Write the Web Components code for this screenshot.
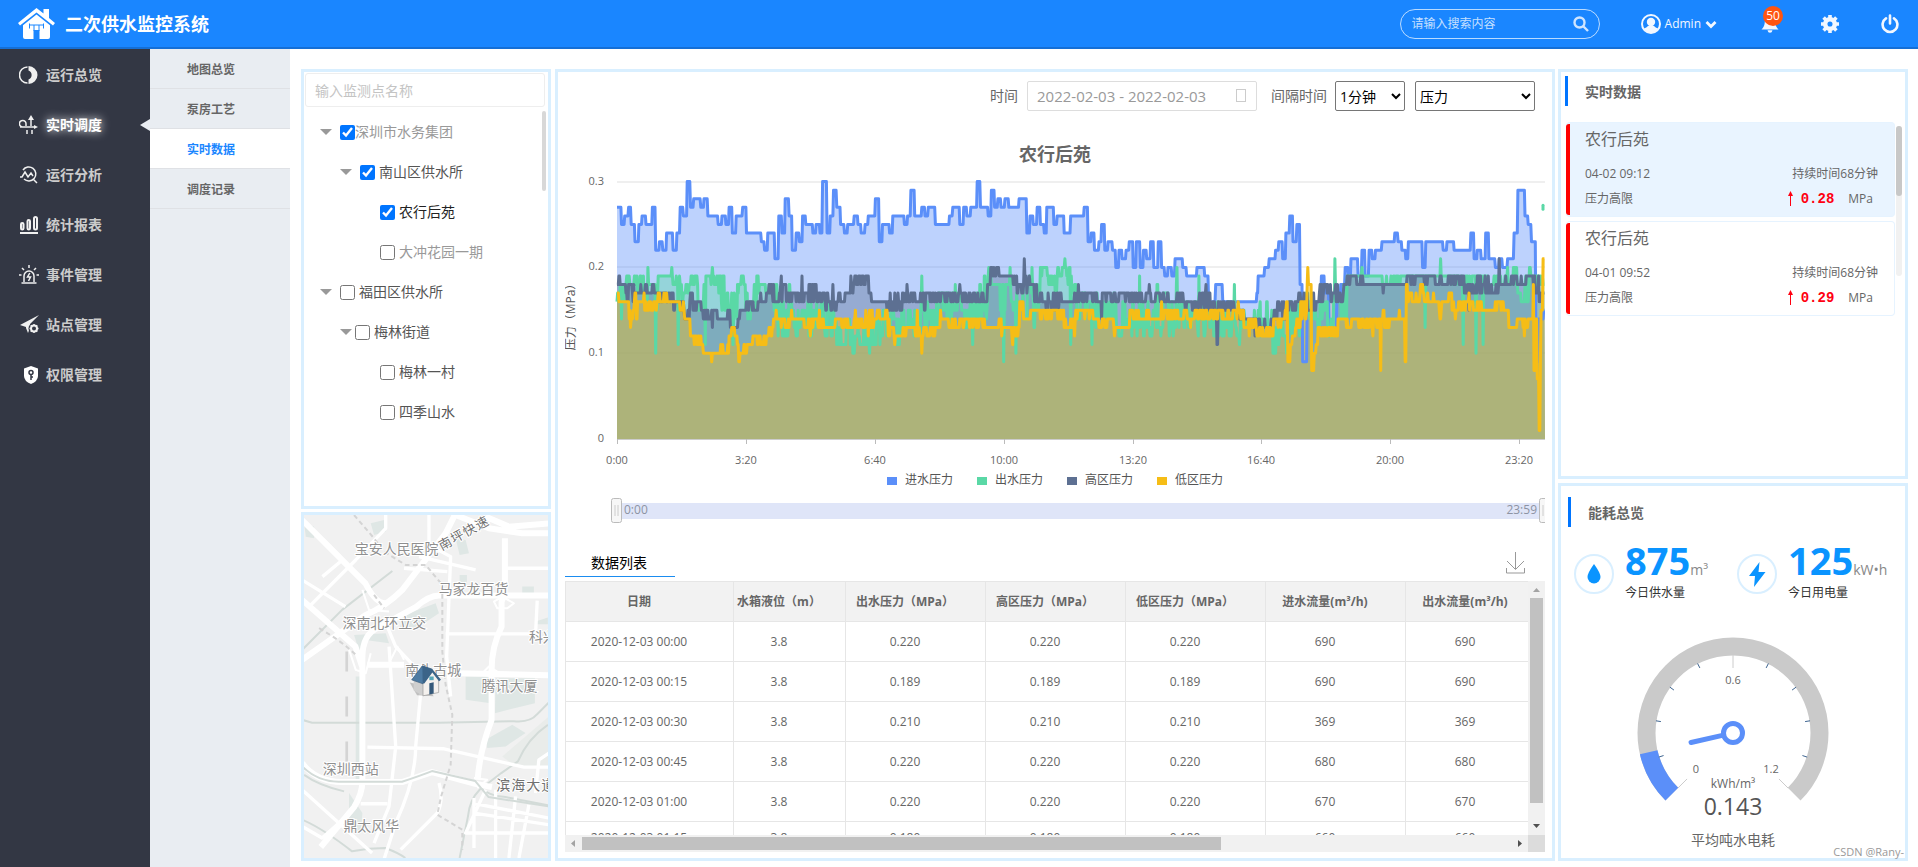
<!DOCTYPE html>
<html lang="zh-CN">
<head>
<meta charset="utf-8">
<title>二次供水监控系统</title>
<style>
  html, body { height: 100%; }
  body {
    margin: 0;
    font-family: "Open Sans", "Noto Sans CJK SC", sans-serif;
    font-size: 14px;
    line-height: 20px;
    color: #666;
    background: #fff;
    --blue: #1a86ff;
    --frame: #d9efff;
  }
</style>
</head>
<body>
<monitor-app></monitor-app>

<script>
const define = (name, html, setup) => {
  const template = document.createElement("template");
  template.innerHTML = html;
  customElements.define(name, class extends HTMLElement {
    constructor() {
      super();
      this.attachShadow({ mode: "open" });
      this.shadowRoot.appendChild(template.content.cloneNode(true));
    }

    connectedCallback() {
      if (setup) setup(this, this.shadowRoot);
    }
  });
};

/* ---------- header ---------- */

define("app-header", /* html */ `
  <style>
    :host {
      display: flex;
      align-items: center;
      box-sizing: border-box;
      height: 49px;
      flex: none;
      padding: 0 19px 0 18px;
      background: var(--blue);
      border-bottom: 2px solid #156fd6;
      color: #fff;
    }
    h1 { margin: 0 auto 0 10px; font-size: 18px; line-height: 24px; }
    svg { display: block; }
    .search {
      display: flex;
      align-items: center;
      box-sizing: border-box;
      width: 200px;
      height: 30px;
      padding: 0 10px 0 11px;
      border: 1px solid rgba(255, 255, 255, .7);
      border-radius: 15px;
    }
    input {
      flex: 1;
      min-width: 0;
      padding: 0;
      border: 0;
      outline: 0;
      background: none;
      color: #fff;
      font: 12px/20px "Open Sans", "Noto Sans CJK SC", sans-serif;
    }
    input::placeholder { color: #c6e0ff; opacity: 1; }
    button {
      display: flex;
      align-items: center;
      gap: 4px;
      padding: 0;
      border: 0;
      background: none;
      color: #f2f7ff;
      font: 12px/20px "Open Sans", sans-serif;
      cursor: pointer;
    }
    .user { margin-left: 41px; }
    .user svg:last-child { margin-top: 2px; }
    .bell { position: relative; margin-left: 44px; }
    .badge {
      position: absolute;
      left: 2px;
      top: -9px;
      width: 20px;
      border-radius: 10px;
      background: #ff5512;
      color: #fff;
      text-align: center;
    }
    .gear { margin-left: 42px; }
    .power { margin-left: 42px; }
  </style>
  <svg width="37" height="32" viewBox="0 0 37 32" fill="#fff">
    <path d="M18.500 0 0 15l2 2.400L18.500 4.400 35 17.400l2-2.400-6-4.900V1h-5.500v4.600z"/>
    <path d="M18.500 6.500 5 17.200V29q0 2 2 2h8.500v-9h6v9H30q2 0 2-2V17.200z"/>
    <path d="M11.500 15.500v5M11 17h14.500M25.500 15.500v5M16 17v6M21 17v6" fill="none" stroke="#1a86ff"/>
  </svg>
  <h1>二次供水监控系统</h1>
  <label class="search">
    <input type="text" placeholder="请输入搜索内容" aria-label="搜索">
    <svg width="16" height="16" viewBox="0 0 16 16" fill="none" stroke="#cfe5ff" stroke-width="2.400"><circle cx="6.500" cy="6.500" r="5"/><path d="m10 10 5 5"/></svg>
  </label>
  <button class="user">
    <svg width="20" height="20" viewBox="0 0 20 20"><circle cx="10" cy="10" r="9" fill="none" stroke="#f2f7ff" stroke-width="2"/><circle cx="10" cy="8" r="4.200" fill="#f2f7ff"/><path d="M3 14.500q2.500-1 4-2.500h6q1.500 1.500 4 2.500Q14 19 10 19t-7-4.500" fill="#f2f7ff"/></svg>
    Admin
    <svg width="12" height="8" viewBox="0 0 12 8" fill="none" stroke="#f2f7ff" stroke-width="2.800"><path d="m1.500 1 4.500 4.500L10.500 1"/></svg>
  </button>
  <button class="bell" aria-label="消息">
    <svg width="18" height="18" viewBox="0 0 18 18" fill="#f2f7ff"><path d="M9 0q1.200 0 1.200 1.300Q14 2.200 14.200 7q.2 5 3.300 7.500H.5Q3.600 12 3.800 7 4 2.200 7.800 1.300 7.800 0 9 0M6.500 15.300h5Q11 17.800 9 17.800t-2.500-2.500"/></svg>
    <span class="badge">50</span>
  </button>
  <button class="gear" aria-label="设置">
    <svg width="18" height="18" viewBox="0 0 18 18"><circle cx="9" cy="9" r="4.800" fill="none" stroke="#f2f7ff" stroke-width="4.500"/><path d="M9 0v4m0 10v4M0 9h4m10 0h4M2.600 2.600l2.900 2.900m7 7 2.900 2.900m0-12.800-2.900 2.900m-7 7-2.900 2.900" stroke="#f2f7ff" stroke-width="3.600"/></svg>
  </button>
  <button class="power" aria-label="退出">
    <svg width="18" height="20" viewBox="0 0 18 20" fill="none" stroke="#f2f7ff" stroke-width="2.600" stroke-linecap="round"><path d="M5 4.300a7.400 7.400 0 1 0 8 0M9 1.500v8"/></svg>
  </button>
`);

/* ---------- navigation ---------- */

define("nav-item", /* html */ `
  <style>
    :host { display: block; color: #ccc; font-weight: bold; }
    :host([active]) { color: #fff; text-shadow: 0 0 10px #fff; }
    a {
      position: relative;
      display: flex;
      align-items: center;
      gap: 7px;
      height: 50px;
      padding: 2px 0 0 19px;
      box-sizing: border-box;
      color: inherit;
      text-decoration: none;
    }
    :host([active]) a::after {
      content: "";
      position: absolute;
      right: 0;
      top: 20px;
      border: solid transparent;
      border-width: 6px 10px 6px 0;
      border-right-color: #e9edf2;
    }
  </style>
  <a href="#"><slot name="icon"></slot><slot></slot></a>
`);

define("side-nav", /* html */ `
  <style>
    :host { display: block; flex: none; width: 150px; background: #333744; }
    svg { display: block; flex: none; width: 20px; height: 20px; fill: none; stroke: #f0f0f0; stroke-width: 1.500; }
  </style>
  <nav>
    <nav-item><svg slot="icon" viewBox="0 0 20 20"><path d="M8.500 2a8 8 0 0 0 0 16"/><path d="M9.500 1a9 9 0 0 1 0 18v-4.500a4.800 4.800 0 0 0 0-9z" fill="#f0f0f0" stroke="none"/></svg>运行总览</nav-item>
    <nav-item active><svg slot="icon" viewBox="0 0 20 20"><path d="M1 12h15M4 12a3.300 3.300 0 1 1 3-3v2M12 11V4M8 15v4m5-4v4"/><path d="m12 0 3 5H9zm7 12-4-2v4z" fill="#f0f0f0" stroke="none"/></svg>实时调度</nav-item>
    <nav-item><svg slot="icon" viewBox="0 0 20 20"><path d="M4 5a7 7 0 1 1 1 9M1 12h2l3-5 3 5 3-4 2 3M14.500 14.500 18 18"/></svg>运行分析</nav-item>
    <nav-item><svg slot="icon" viewBox="0 0 20 20"><g stroke-width="2"><rect x="2" y="8" width="2.500" height="6.500" rx="1.200"/><rect x="8.500" y="5" width="2.500" height="9.500" rx="1.200"/><rect x="15" y="2" width="3" height="12.500" rx="1.500"/><path d="M1 18h18"/></g></svg>统计报表</nav-item>
    <nav-item><svg slot="icon" viewBox="0 0 20 20"><path d="M5 17v-6a5 5 0 0 1 10 0v6M2.500 18h15M0 10h2.500m15 0H20M10 0v3M3 3l2 2m12-2-2 2"/><path d="M10.800 8 8.500 12h3l-2 4"/></svg>事件管理</nav-item>
    <nav-item><svg slot="icon" viewBox="0 0 20 20"><path d="M20 0 1 10l6 2v1l2 5 2-5V9z" fill="#f0f0f0" stroke="none"/><circle cx="15" cy="13.500" r="5.500" fill="#333744" stroke="none"/><g stroke-width="2"><circle cx="15" cy="13.500" r="3"/><path d="M15 9v1.500m0 6V18m-4.500-4.500H12m6 0h1.500m-7.700-3.200 1.100 1.100m4.200 4.200 1.100 1.100m0-6.400-1.100 1.100m-4.200 4.200-1.100 1.100" stroke-width="1.500"/></g></svg>站点管理</nav-item>
    <nav-item><svg slot="icon" viewBox="0 0 20 20"><path d="m12 1 7 2.500V11q0 5-7 8-7-3-7-8V3.500z" fill="#fff" stroke="none"/><g stroke="#333744"><circle cx="12" cy="7.500" r="2"/><path d="M12 9v6m0-3h2"/></g></svg>权限管理</nav-item>
  </nav>
`);

define("sub-nav", /* html */ `
  <style>
    :host { display: block; flex: none; width: 140px; background: #e9edf2; }
    a {
      display: block;
      height: 39px;
      padding-left: 37px;
      border-bottom: 1px solid #dfe1e5;
      color: #666;
      font-size: 12px;
      font-weight: bold;
      line-height: 41px;
      text-decoration: none;
    }
    a.active { background: #fff; color: var(--blue); }
  </style>
  <nav>
    <a href="#">地图总览</a>
    <a href="#">泵房工艺</a>
    <a href="#" class="active">实时数据</a>
    <a href="#">调度记录</a>
  </nav>
`);

/* ---------- generic parts ---------- */

define("panel-box", /* html */ `
  <style>
    :host {
      display: flex;
      flex-direction: column;
      box-sizing: border-box;
      min-height: 0;
      min-width: 0;
      overflow: hidden;
      border: 3px solid var(--frame);
    }
  </style>
  <slot></slot>
`);

define("panel-title", /* html */ `
  <style>
    :host { display: block; flex: none; border-left: 3px solid #0075ff; padding-left: 17px; }
    h2 { margin: 0; font-size: 14px; line-height: 32px; height: 30px; }
  </style>
  <h2><slot></slot></h2>
`);

/* ---------- monitoring point tree ---------- */

define("tree-row", /* html */ `
  <style>
    :host { display: block; color: #555; }
    :host([muted]) { color: #999; }
    :host([current]) { color: #222; }
    div { display: flex; align-items: center; height: 40px; }
    i {
      flex: none;
      width: 0;
      margin-right: 8px;
      border: solid transparent;
      border-width: 6px 6px 0;
      border-top-color: #999;
    }
    :host([leaf]) i { visibility: hidden; }
    :host([near]) i { margin-right: 3px; }
    label { display: flex; align-items: center; gap: 4px; }
    :host([tight]) label { gap: 0; }
    input { width: 15px; height: 15px; margin: 0; accent-color: #0075ff; }
  </style>
  <div><i></i><label><input type="checkbox"><span><slot></slot></span></label></div>
`, (host, root) => {
  root.querySelector("div").style.paddingLeft = (Number(host.getAttribute("level")) * 20) + "px";
  root.querySelector("input").checked = host.hasAttribute("checked");
});

define("point-tree", /* html */ `
  <style>
    :host { display: flex; flex-direction: column; flex: 1; min-height: 0; }
    input {
      height: 34px;
      margin: 1px 3px 0 1px;
      padding: 0 9px;
      border: 1px solid #eee;
      border-radius: 3px;
      box-sizing: border-box;
      outline: 0;
      color: #666;
      font: 14px/20px "Open Sans", "Noto Sans CJK SC", sans-serif;
    }
    input::placeholder { color: #c4c4c4; opacity: 1; }
    .body { display: flex; flex: 1; min-height: 0; padding: 4px 2px 0 16px; }
    .rows { flex: 1; padding-top: 1px; overflow: hidden; }
    .thumb { width: 4px; height: 80px; border-radius: 2px; background: #d8d8d8; }
  </style>
  <input type="text" placeholder="输入监测点名称" aria-label="监测点名称">
  <div class="body">
    <div class="rows">
      <tree-row level="0" checked muted tight>深圳市水务集团</tree-row>
      <tree-row level="1" checked>南山区供水所</tree-row>
      <tree-row level="2" leaf checked current>农行后苑</tree-row>
      <tree-row level="2" leaf muted>大冲花园一期</tree-row>
      <tree-row level="0">福田区供水所</tree-row>
      <tree-row level="1" near>梅林街道</tree-row>
      <tree-row level="2" leaf>梅林一村</tree-row>
      <tree-row level="2" leaf>四季山水</tree-row>
    </div>
    <div class="thumb"></div>
  </div>
`);

/* ---------- map ---------- */

define("area-map", /* html */ `
  <style>
    :host { display: block; flex: 1; min-height: 0; background: #f1f1f1; }
    svg { display: block; width: 100%; height: 100%; }
    path { stroke-linejoin: round; }
    .w { stroke: #fff; fill: none; }
    .g { stroke: #d3dbd8; stroke-width: 6; fill: none; }
    .rail { stroke: #d4d4d4; stroke-width: 6; stroke-dasharray: 14 10; fill: none; }
    .lake { fill: #dfe7e5; }
    text { font-size: 42px; fill: #8f8f8f; stroke: #fff; stroke-width: 6; paint-order: stroke; }
    .road { fill: #707070; letter-spacing: 3px; }
    .slope { font-size: 39px; }
  </style>
  <svg viewBox="42 45 738 1030" preserveAspectRatio="xMidYMid slice">
    <path class="lake" d="M45 70l30 10v35l-25-5zM245 70l40-10 5 35-35 10zM500 115l30 5 10 40-28 5zM345 345l95-35 10 30-60 40-60 10zM195 405l95-5 10 30-60-8-30 30zM530 530h75v80l-75-10zM620 535h118v75l-120 30zM200 530h18v310h-18zM590 720l80-45 40 25-60 40-55 5zM180 880l40 60-5 60-35-10zM512 225h22v30h-22zM700 260h35v20h-35zM740 365l37-12v20h-37z"/>
    <path d="M640 770l140-120v150H680z" fill="#e9ecea"/>
    <path class="g" d="M39 450l120-120L310 213M39 660l30 9h380l225-5q50 5 70-20l35-35M777 675q-60 40-90 110l-50 35-65 50q-30 30-35 80l-25 125M45 825q40 30 120 50M39 960q60 25 150 95 50-10 100-10 40 15 60 30M570 860q30 30 80 32l130 25"/>
    <g class="w" stroke-width="18">
      <path d="M39 480 230 345q60-25 110-75L470 100l30-60M39 60l80 80 110 110q30 60 60 60M39 300l160 140 20 60"/>
      <path d="M780 287H450q-30 0-70 35l-110 60q-50 20-50 90v370q0 40-25 80l-100 120"/>
      <path d="M648 115v130q0 40-10 60v75q-30 60-30 130v150q-35 90-42 180M500 520l280 6M235 495h110M39 790q40 55 120 57h180q60-20 90-30l130 35 50 10"/>
      <path d="M500 45l100 40 100 15h80M590 50l70 30 120-10"/>
    </g>
    <g class="w" stroke-width="10">
      <path d="M295 380l25 60 75 80v60l-15 160q0 100-60 230l-45 140M300 440l20 300-20 180-45 110M420 45v90l65 35-12 300 12 120M345 205l130 10M655 205h125M470 402h270l5-100M235 742l230 5 240 55h75M39 240l130 80M60 320l140-140 90-95V45M100 230l60-50M39 870l210 190M39 980l60 35 90-80M390 170l170 40M445 940l-110 110M450 850q15 50-5 90M215 912h80M555 895v150M590 870l-60 130h250M620 870v205M680 890l-20 185M720 915l-30 160M555 940l225 35M550 910l230 45M740 880l10-100 30-20"/>
      <path d="M640 290l-25 15 10 20h30l20-15zM600 500l-20 20 25 10 20-15zM220 270l20 60 60 5M305 480l20-40 20 40M180 450l20 60 30 10 15-60M555 835l40 5-30 25" stroke-width="6"/>
    </g>
    <path class="g" d="M39 800q50 50 120 46h180q60-20 90-32l130 30 40 48 180 28"/>
    <path class="rail" d="M195 45l60 70 30 40 65 40h60l50 60v200l10 100 20 90-5 150-30 100-10 50 75 45v60"/>
    <path class="rail" d="M90 385q70 40 110 80M255 285l30 40" stroke-width="9"/>
    <path d="M173 455v335" fill="none" stroke="#d4d4d4" stroke-width="8" stroke-dasharray="60 75"/>
    <text x="197" y="163">宝安人民医院</text>
    <text x="449" y="283">马家龙百货</text>
    <text x="160" y="385">深南北环立交</text>
    <text x="349" y="526">南头古城</text>
    <text x="720" y="427">科兴</text>
    <text x="578" y="574">腾讯大厦</text>
    <text x="101" y="822">深圳西站</text>
    <text x="163" y="993">鼎太风华</text>
    <text class="road" x="622" y="872">滨海大道</text>
    <text class="road slope" transform="translate(458 152) rotate(-29)">南坪快速</text>
    <g>
      <path d="M362 548l22 38 50 3-20-30z" fill="#777" opacity=".4"/>
      <path d="M374 538l26-34 32 34v40l-30 10-28-16z" fill="#cfcfcf"/>
      <path d="M402 550l30-38 17 24v42l-47 10z" fill="#f4f1ee" stroke="#999" stroke-width="2"/>
      <path d="M368 540l32-42 30 10-28 44z" fill="#4d7ba3" stroke="#37597a" stroke-width="2"/>
      <path d="M400 498l30 10 26 32-6 4-20-26-24 33-5-2z" fill="#3b6488"/>
      <path d="M421 550l13-3v34l-13 3z" fill="#35597a"/>
      <path d="M421 530h13v11h-13z" fill="#56a6b8"/>
    </g>
  </svg>
`);

/* ---------- pressure chart ---------- */

// Times are in thirds of a pixel of the plot at its design width (2784 = 24h);
// pressures are in 0.01 MPa. "start:value" holds until the next entry and
// "start:low-high" jitters between the two.
const SPAN = 2784;
const MINUTES = 1440;

const SERIES = [
  {
    name: "进水压力",
    color: "#5b8ff9",
    steps: "0:27 12:25 22:26 33:27 42:25 53:23 64:25 75:26 86:25 106:27 116:22 127:23 137:22 148:24 168:22 179:24 188:27 198:26 209:30 219:27 229:28 250:27 261:28 272:26 303:25 315:26 325:25 336:27 346:24 357:26 377:27 388:24 432:23 441:22 452:24 473:21 484:26 494:24 504:28 515:26 525:22 536:24 546:23 556:26 566:25 587:24 597:25 608:24 616:30 629:24 639:26 649:29 659:27 670:25 681:24 691:25 711:26 722:25 732:24 744:25 754:26 775:28 785:23 796:25 816:24 827:26 861:25 871:26 881:29 892:26 913:27 923:26 933:27 954:25 996:26 1007:27 1028:25 1039:27 1049:26 1060:27 1080:30 1090:27 1113:26 1122:29 1132:27 1142:28 1152:27 1163:28 1175:27 1206:28 1228:24 1238:26 1248:25 1259:27 1269:25 1280:24 1289:27 1310:25 1320:26 1340:24 1360:26 1400:27 1412:23 1422:24 1432:22 1445:23 1453:25 1463:22 1473:23 1485:22 1495:20 1505:22 1515:21 1526:22 1537:23 1547:20 1557:23 1568:20 1578:22 1588:21 1600:23 1610:20 1623:23 1633:20 1643:19 1653:20 1664:19 1674:21 1696:20 1708:19 1739:20 1762:19 1773:16 1795:18 1817:16 1918:17 1922:19 1943:20 1955:21 1975:22 1985:23 1997:21 2006:24 2017:26 2028:23 2038:25 2049:18 2057:9 2070:15 2080:16 2112:19 2122:17 2135:13 2158:16 2170:18 2183:20 2193:19 2202:21 2222:19 2234:22 2244:19 2255:22 2265:21 2275:22 2293:23 2332:24 2343:23 2353:22 2365:21 2374:23 2415:20 2426:23 2478:22 2489:23 2510:22 2560:24 2570:21 2580:22 2591:21 2605:24 2615:21 2635:20 2645:21 2655:20 2670:21 2690:24 2702:29 2723:26 2733:25 2743:23 2756:9 2764:14 2779:15"
  },
  {
    name: "出水压力",
    color: "#5ad8a6",
    steps: "0:16-19 25:18-19 60:17-19 80:16-18 110:15-19 122:19 168:18-19 190:16-19 212:16-18 222:18-19 240:15-18 265:19 280:18-19 305:15-19 345:14-18 360:17-19 385:14-18 410:13-19 430:17-18 460:15-19 475:12-18 520:12-16 650:11-15 700:10-13 765:11-15 860:12-15 910:13-16 960:13-17 1060:14-19 1112:18-19 1130:13-18 1180:14-18 1220:13-19 1270:19-20 1290:18-19 1310:17-20 1380:14-18 1430:13-17 1500:12-16 1620:12-18 1680:13-16 1740:12-16 1830:12-16 1870:13-15 1920:12-16 1965:10-14 2015:12-16 2060:14-18 2100:12-16 2150:14-18 2190:19 2290:18-19 2350:19 2440:19 2500:18-19 2670:18-20 2700:16-19 2735:18-20 2750:18-19 2778:18",
    spikes: { 14: 14, 92: 20, 116: 10, 165: 20, 183: 11, 265: 11, 286: 20, 348: 11, 914: 19, 1015: 18, 1067: 11, 1115: 20, 1160: 9, 1180: 20, 1196: 10, 1246: 20, 1343: 21, 1362: 11, 1424: 11, 1567: 19, 1680: 20, 1745: 19, 1852: 18, 1867: 11, 2153: 21, 2154: 21, 2235: 20, 2425: 13, 2470: 21, 2538: 11, 2578: 10, 2598: 11 }
  },
  {
    name: "高区压力",
    color: "#5d7092",
    steps: "0:18-19 8:18 22:16-18 55:17 70:17-18 125:16-17 170:15-16 200:14-15 218:15-17 230:15-16 255:14-15 280:14-15 340:13 362:14-15 385:15-16 430:16-17 455:16-18 475:16-17 490:16-18 510:16-17 562:16-18 606:15-17 660:16-17 700:17-19 720:18-19 755:17 762:16 802:15-17 855:16-17 920:15-17 950:16-17 1110:17-18 1120:19-20 1150:19 1186:18-19 1200:17-18 1220:17-19 1250:16-18 1272:15-17 1330:16-17 1380:16-17 1630:16-17 1700:15-16 1730:15-17 1780:15-16 1858:14-15 1880:14 1915:13-14 1970:14-16 2005:15-16 2040:15-17 2100:16-18 2180:18 2190:18-19 2240:18 2288:17-18 2300:18 2355:18-19 2530:17-19 2560:17-18 2580:17-19 2615:17-18 2645:18 2665:18-19 2750:17-19 2765:16-18 2779:17",
    spikes: { 286: 13, 493: 19, 555: 19, 648: 18, 870: 18, 1028: 18, 1126: 20, 1222: 21, 1385: 18, 1454: 14, 1596: 18, 1767: 18, 1800: 11, 1801: 11, 1914: 12, 2555: 15, 2646: 21 }
  },
  {
    name: "低区压力",
    color: "#f6bd16",
    steps: "0:17 4:16 24:14-16 50:14-17 60:16 80:15-16 120:16-17 152:16 188:15-16 202:13-14 220:12 232:11-12 258:10 305:10-11 335:12 344:13 352:12 360:11 364:10 375:10-11 390:11-12 450:12-13 465:13-14 475:14 492:13-14 520:14 555:13-14 620:13 650:13-14 740:13-15 770:14-15 812:12-14 830:12 850:12-13 870:13 895:12-13 955:13 970:14 985:13-14 1012:13-14 1105:13 1140:13-14 1155:13 1185:12-13 1208:14-16 1240:15 1268:14-15 1340:13-14 1342:13-14 1365:14-15 1430:14 1440:13-14 1470:14 1490:13 1530:13-14 1538:14-15 1565:14 1580:14-15 1605:14 1620:14-15 1640:14-15 1710:14 1730:14-15 1880:13-14 1916:12-13 1970:13-14 1995:14-15 2008:16 2012:9 2020:11 2026:12 2034:13-14 2050:14-16 2070:18 2084:8 2090:10 2096:11 2103:12-13 2155:12 2162:14 2180:13-14 2208:14 2220:13-14 2290:14 2297:15 2302:13-14 2320:14 2364:9 2367:18 2372:16-17 2408:17-18 2422:16-17 2450:16 2466:14-15 2474:16 2495:17 2505:15-16 2540:15-16 2600:15 2628:15-16 2660:15 2675:13 2700:14 2712:13-14 2748:18 2751:8 2755:14 2760:7 2765:1 2769:10 2772:15 2778:21",
    spikes: { 40: 13, 82: 17, 285: 9, 366: 9, 367: 9, 477: 15, 523: 15, 580: 12, 608: 15, 715: 15, 754: 12, 834: 11, 900: 15, 915: 10, 971: 15, 1155: 12, 1187: 11, 1215: 16, 1226: 14, 1373: 12, 1395: 15, 1493: 12, 1633: 16, 1720: 13, 1863: 16, 1897: 12, 2073: 20, 2268: 12, 2291: 8, 2347: 15, 2414: 18, 2471: 14, 2515: 14, 2555: 17, 2722: 12 }
  }
];

function samples(series, seed) {
  const steps = series.steps.split(" ").map(s => {
    const [start, range] = s.split(":");
    const [low, high = low] = range.split("-");
    return { start: +start, low: +low, high: +high };
  });
  const random = () => {
    seed = (seed * 16807) % 2147483647;
    return seed / 2147483647;
  };
  const values = [];
  for (let i = 0; i < MINUTES; i++) {
    const at = i / MINUTES * SPAN;
    let step = steps[0];
    for (const s of steps) if (s.start <= at) step = s;
    const last = values[i - 1];
    const hold = last >= step.low && last <= step.high && random() < .4;
    values.push(hold ? last : step.low + Math.floor(random() * (step.high - step.low + 1)));
  }
  for (const at in series.spikes || {}) {
    values[Math.round(at / SPAN * MINUTES)] = series.spikes[at];
  }
  return values;
}

const TIMES = ["0:00", "3:20", "6:40", "10:00", "13:20", "16:40", "20:00", "23:20"];

define("pressure-chart", /* html */ `
  <style>
    :host { display: block; flex: none; height: 356px; }
    svg { display: block; width: 100%; height: 100%; }
    text { font-size: 12px; fill: #555; }
    .tick { font-size: 11px; fill: #666; }
    .zoom { fill: #8d93a3; }
    polyline { fill: none; stroke-width: 3; stroke-linejoin: round; }
  </style>
  <svg></svg>
`, (host, root) => {
  const data = SERIES.map((s, i) => samples(s, 97 + i * 1301));

  const draw = () => {
    const width = host.clientWidth;
    const left = 52;
    const bottom = 269;
    const plot = width - left;
    const x = minute => left + minute / MINUTES * plot;
    const y = value => bottom - value * 8.58;
    let out = "";

    [10, 20, 30].forEach(v => {
      out += `<path d="M${left} ${Math.round(y(v))}H${width}" stroke="#efefef" stroke-width="2"/>`;
    });
    const lines = data.map(values => values.map((v, i) => `${x(i).toFixed(1)},${y(v).toFixed(1)}`).join(" "));
    SERIES.forEach((s, i) => {
      out += `<polygon points="${left},${bottom} ${lines[i]} ${width},${bottom}" fill="${s.color}" fill-opacity=".4"/>`;
    });
    SERIES.forEach((s, i) => {
      out += `<polyline points="${lines[i]}" stroke="${s.color}"/>`;
    });
    out += `<path d="M${width - 2} ${y(27) - 2}v4" stroke="#5ad8a6" stroke-width="3" stroke-linecap="round"/>`;

    out += `<path d="M${left} ${bottom}.5H${width}" stroke="#ccc"/>`;
    [0, 10, 20, 30].forEach(v => {
      out += `<text class="tick" x="39" y="${Math.round(y(v)) + 3}" text-anchor="end">${v / 100}</text>`;
    });
    TIMES.forEach((t, i) => {
      const tx = Math.round(x(i * 200));
      out += `<path d="M${tx}.5 ${bottom}v5" stroke="#bbb"/><text class="tick" x="${tx}" y="294" text-anchor="middle">${t}</text>`;
    });
    out += `<text transform="translate(10 144) rotate(-90)" text-anchor="middle">压力（MPa）</text>`;

    SERIES.forEach((s, i) => {
      const lx = width / 2 - 168 + i * 90;
      out += `<rect x="${lx}" y="307" width="10" height="8" fill="${s.color}"/><text x="${lx + 18}" y="314">${s.name}</text>`;
    });

    // range slider under the plot
    out += `<rect x="${left}" y="333" width="${plot}" height="16" fill="#dfe5f8"/>`;
    out += `<text class="zoom" x="59" y="344">0:00</text><text class="zoom" x="${width - 8}" y="344" text-anchor="end">23:59</text>`;
    [left, width].forEach(hx => {
      out += `<rect x="${hx - 5.5}" y="328.5" width="10" height="24" rx="2" fill="#f7f7f7" stroke="#bbb"/><path d="M${hx - 2} 335v11m3-11v11" stroke="#ccc"/>`;
    });

    root.querySelector("svg").innerHTML = out;
  };

  draw();
  window.addEventListener("resize", draw);
});

define("chart-toolbar", /* html */ `
  <style>
    :host { display: flex; justify-content: flex-end; align-items: center; flex: none; height: 30px; padding-right: 10px; }
    .date {
      display: flex;
      align-items: center;
      justify-content: space-between;
      box-sizing: border-box;
      width: 230px;
      height: 30px;
      margin: 0 14px 0 9px;
      padding: 0 9px;
      border: 1px solid #ddd;
      border-radius: 2px;
    }
    .date input {
      width: 180px;
      padding: 0;
      border: 0;
      outline: 0;
      color: #999;
      font: 15px/20px "Open Sans", sans-serif;
    }
    select {
      height: 30px;
      border: 1px solid #767676;
      border-radius: 2px;
      background: #fff;
      color: #000;
      font: 14px/20px "Open Sans", "Noto Sans CJK SC", sans-serif;
    }
    .step { width: 70px; margin: 0 10px 0 8px; }
    .kind { width: 120px; }
  </style>
  <label for="range">时间</label>
  <span class="date">
    <input id="range" type="text" value="2022-02-03 - 2022-02-03">
    <svg width="11" height="14" fill="none" stroke="#ccc"><rect x=".5" y=".5" width="9" height="12"/></svg>
  </span>
  <label for="step">间隔时间</label>
  <select id="step" class="step"><option>1分钟</option></select>
  <select class="kind" aria-label="数据类型"><option>压力</option></select>
`);

/* ---------- data table ---------- */

const COLUMNS = ["日期", "水箱液位（m）", "出水压力（MPa）", "高区压力（MPa）", "低区压力（MPa）", "进水流量(m³/h)", "出水流量(m³/h)"];
const ROWS = [
  ["2020-12-03 00:00", "0.220", "690"],
  ["2020-12-03 00:15", "0.189", "690"],
  ["2020-12-03 00:30", "0.210", "369"],
  ["2020-12-03 00:45", "0.220", "680"],
  ["2020-12-03 01:00", "0.220", "670"],
  ["2020-12-03 01:15", "0.180", "660"]
];

define("data-table", /* html */ `
  <style>
    :host { display: flex; flex-direction: column; flex: 1; min-height: 0; }
    .tabs { display: flex; justify-content: space-between; align-items: flex-end; height: 27px; margin-bottom: 4px; padding-right: 19px; }
    h3 {
      box-sizing: border-box;
      width: 110px;
      height: 27px;
      margin: 0;
      padding-left: 26px;
      border-bottom: 1px solid #1a8cf0;
      color: #000;
      font-size: 14px;
      font-weight: normal;
      line-height: 26px;
    }
    button { padding: 0; border: 0; background: none; cursor: pointer; }
    svg { display: block; }
    .scroller { display: grid; grid-template: minmax(0, 1fr) 17px / minmax(0, 1fr) 17px; flex: 1; min-height: 0; }
    .view { overflow: hidden; }
    table { width: 980px; border-collapse: collapse; table-layout: fixed; font-size: 12px; }
    th, td { box-sizing: border-box; height: 40px; padding: 0 21px 0 0; border: 1px solid #e6e6e6; text-align: center; white-space: nowrap; }
    th { background: #f2f2f2; }
    tr:last-child td { height: 32px; }
    .bar { display: flex; align-items: center; background: #f1f1f1; }
    .bar.v { flex-direction: column; }
    .bar b { background: #c1c1c1; }
    .v b { width: 13px; height: 205px; }
    .h b { height: 13px; width: 639px; }
    .v svg:last-child { margin-top: auto; }
    .h svg:last-child { margin-left: auto; }
    .corner { background: #dcdcdc; }
  </style>
  <div class="tabs">
    <h3>数据列表</h3>
    <button aria-label="下载"><svg width="21" height="25" viewBox="0 0 21 25" fill="none" stroke="#999"><path d="M10.500 0v17M2 9l8.500 8.500L19 9M1.500 16v5h18v-5"/></svg></button>
  </div>
  <div class="scroller">
    <div class="view">
      <table>
        <colgroup><col width="168"><col width="112"><col width="140"><col width="140"><col width="140"><col width="140"><col width="140"></colgroup>
        <thead></thead>
        <tbody></tbody>
      </table>
    </div>
    <div class="bar v">
      <svg width="17" height="17"><path d="M5 11h7l-3.500-4z" fill="#a3a3a3"/></svg><b></b>
      <svg width="17" height="17"><path d="M5 6h7l-3.500 4z" fill="#505050"/></svg>
    </div>
    <div class="bar h">
      <svg width="17" height="17"><path d="M10 5v7L6 8.500z" fill="#a3a3a3"/></svg><b></b>
      <svg width="17" height="17"><path d="M7 5v7l4-3.500z" fill="#505050"/></svg>
    </div>
    <div class="corner"></div>
  </div>
`, (host, root) => {
  root.querySelector("thead").innerHTML = `<tr>${COLUMNS.map(c => `<th>${c}</th>`).join("")}</tr>`;
  root.querySelector("tbody").innerHTML = ROWS.map(([date, pressure, flow]) =>
    `<tr>${[date, "3.8", pressure, pressure, pressure, flow, flow].map(v => `<td>${v}</td>`).join("")}</tr>`
  ).join("");
});

/* ---------- alarms ---------- */

define("alarm-card", /* html */ `
  <style>
    :host {
      display: block;
      box-sizing: border-box;
      height: 95px;
      padding: 1px 0;
      border: 1px solid #e6f3ff;
      border-left: 0;
      border-radius: 4px;
    }
    :host([selected]) { background: #e9f4ff; }
    article { box-sizing: border-box; height: 91px; padding: 4px 16px 0 15px; border-left: 4px solid #f00; border-radius: 3px 0 0 3px; font-size: 12px; }
    h3 { margin: 0 0 11px; font-size: 16px; font-weight: normal; line-height: 22px; }
    div { display: flex; align-items: center; height: 25px; }
    .time { margin-right: auto; }
    svg { margin-right: 8px; }
    b { margin-right: 14px; color: #f01; font: bold 14px/20px "Liberation Mono", monospace; }
    .unit { margin-right: 5px; }
  </style>
  <article>
    <h3>农行后苑</h3>
    <div><span class="time"><slot name="time"></slot></span><span>持续时间68分钟</span></div>
    <div>
      <span class="time">压力高限</span>
      <svg width="5" height="15"><path d="M2.500 1v14" stroke="#f01"/><path d="M0 5h5L2.500 0z" fill="#f01"/></svg>
      <b><slot></slot></b><span class="unit">MPa</span>
    </div>
  </article>
`);

define("alarm-list", /* html */ `
  <style>
    :host { display: flex; gap: 1px; margin: 16px 3px 0 5px; }
    .cards { display: flex; flex-direction: column; gap: 4px; flex: 1; }
    .track { width: 6px; height: 150px; margin-top: 4px; background: #f1f1f1; border-radius: 3px; }
    .thumb { height: 70px; background: #c8c8c8; border-radius: 3px; }
  </style>
  <div class="cards">
    <alarm-card selected><span slot="time">04-02 09:12</span>0.28</alarm-card>
    <alarm-card><span slot="time">04-01 09:52</span>0.29</alarm-card>
  </div>
  <div class="track"><div class="thumb"></div></div>
`);

/* ---------- energy ---------- */

define("energy-stat", /* html */ `
  <style>
    :host { display: flex; gap: 11px; flex: 1; }
    .icon {
      display: flex;
      align-items: center;
      justify-content: center;
      flex: none;
      box-sizing: border-box;
      width: 40px;
      height: 40px;
      margin-top: 12px;
      border: 2px solid var(--frame);
      border-radius: 50%;
    }
    .value { display: flex; align-items: baseline; height: 42px; white-space: nowrap; }
    b { color: #0a94ff; font-size: 38px; line-height: 36px; }
    .unit { color: #888; }
    .name { color: #333; font-size: 12px; line-height: 18px; }
  </style>
  <span class="icon"><slot name="icon"></slot></span>
  <div>
    <div class="value"><b><slot></slot></b><span class="unit"><slot name="unit"></slot></span></div>
    <div class="name"><slot name="name"></slot></div>
  </div>
`);

define("energy-gauge", /* html */ `
  <style>
    :host { display: block; }
    svg { display: block; margin: 0 auto; }
    text { font-size: 12px; fill: #666; text-anchor: middle; }
    .small { font-size: 11px; }
    .value { font-size: 23px; fill: #555; }
    .title { font-size: 14px; }
  </style>
  <svg width="220" height="218" viewBox="0 0 220 218"></svg>
`, (host, root) => {
  const cx = 110;
  const cy = 99;
  const at = (deg, r) => {
    const a = deg * Math.PI / 180;
    return `${(cx + r * Math.cos(a)).toFixed(2)} ${(cy - r * Math.sin(a)).toFixed(2)}`;
  };
  const split = 225 - 270 * .143 / 1.2;
  let out = `<path d="M${at(225, 86.5)}A86.5 86.5 0 1 1 ${at(-45, 86.5)}" fill="none" stroke="#cacaca" stroke-width="18"/>`;
  out += `<path d="M${at(225, 86.5)}A86.5 86.5 0 0 1 ${at(split, 86.5)}" fill="none" stroke="#5b8ff9" stroke-width="18"/>`;
  for (let i = 0; i <= 10; i++) {
    const deg = 225 - i * 27;
    const major = i % 5 === 0;
    out += `<path d="M${at(deg, 78)}L${at(deg, major ? 65 : 73)}" stroke="${major ? "#ccc" : "#3d6490"}"/>`;
  }
  out += `<path d="M${at(split, 12)}L${at(split, 43)}" stroke="#5b8ff9" stroke-width="5" stroke-linecap="round"/>`;
  out += `<circle cx="${cx}" cy="${cy}" r="9.5" fill="#fff" stroke="#5b8ff9" stroke-width="5"/>`;
  out += `<text class="small" x="110" y="50">0.6</text><text class="small" x="73" y="139">0</text><text class="small" x="148" y="139">1.2</text>`;
  out += `<text x="110" y="154">kWh/m³</text><text class="value" x="110" y="181">0.143</text><text class="title" x="110" y="211">平均吨水电耗</text>`;
  root.querySelector("svg").innerHTML = out;
});

/* ---------- page ---------- */

define("monitor-app", /* html */ `
  <style>
    :host { display: flex; flex-direction: column; height: 100vh; min-height: 760px; }
    .page { display: flex; flex: 1; min-height: 0; }
    main {
      display: grid;
      grid-template-columns: 250px minmax(0, 1fr) 350px;
      column-gap: 3px;
      flex: 1;
      min-width: 0;
      padding: 20px 10px 6px 11px;
    }
    .left, .right { display: grid; min-height: 0; }
    .left { grid-template-rows: minmax(0, 440fr) minmax(0, 349fr); row-gap: 3px; }
    .right { grid-template-rows: minmax(0, 410fr) minmax(0, 378fr); row-gap: 4px; }
    .alarms { padding: 4px 0 0 0; }
    .energy { padding: 11px 0 0 0; }
    .center { margin-left: 1px; padding: 9px 7px 6px; }
    h2 { margin: 31px 0 4px; font-size: 18px; line-height: 24px; text-align: center; }
    data-table { margin-top: 24px; }
    .alarms panel-title { margin-left: 4px; }
    .energy panel-title { margin-left: 7px; }
    .stats { display: flex; margin: 15px 5px 0 13px; }
    energy-gauge { margin-top: 32px; }
    .mark { position: absolute; right: 14px; bottom: 7px; color: #999; font-size: 11px; line-height: 16px; }
  </style>
  <app-header></app-header>
  <div class="page">
    <side-nav></side-nav>
    <sub-nav></sub-nav>
    <main>
      <div class="left">
        <panel-box><point-tree></point-tree></panel-box>
        <panel-box><area-map></area-map></panel-box>
      </div>
      <panel-box class="center">
        <chart-toolbar></chart-toolbar>
        <h2>农行后苑</h2>
        <pressure-chart></pressure-chart>
        <data-table></data-table>
      </panel-box>
      <div class="right">
        <panel-box class="alarms">
          <panel-title>实时数据</panel-title>
          <alarm-list></alarm-list>
        </panel-box>
        <panel-box class="energy">
          <panel-title>能耗总览</panel-title>
          <div class="stats">
            <energy-stat>
              <svg slot="icon" width="14" height="20" viewBox="0 0 14 20" fill="#0a94ff"><path d="M7 0q6.500 9 6.500 13a6.500 6.500 0 0 1-13 0Q.5 9 7 0"/></svg>
              875<span slot="unit">m³</span><span slot="name">今日供水量</span>
            </energy-stat>
            <energy-stat>
              <svg slot="icon" width="18" height="25" viewBox="0 0 18 25" fill="#0a94ff"><path d="M11.500 0 1 14h6L6 25 17.500 10h-7z"/></svg>
              125<span slot="unit">kW•h</span><span slot="name">今日用电量</span>
            </energy-stat>
          </div>
          <energy-gauge></energy-gauge>
        </panel-box>
      </div>
    </main>
  </div>
  <span class="mark">CSDN @Rany-</span>
`);
</script>
</body>
</html>
